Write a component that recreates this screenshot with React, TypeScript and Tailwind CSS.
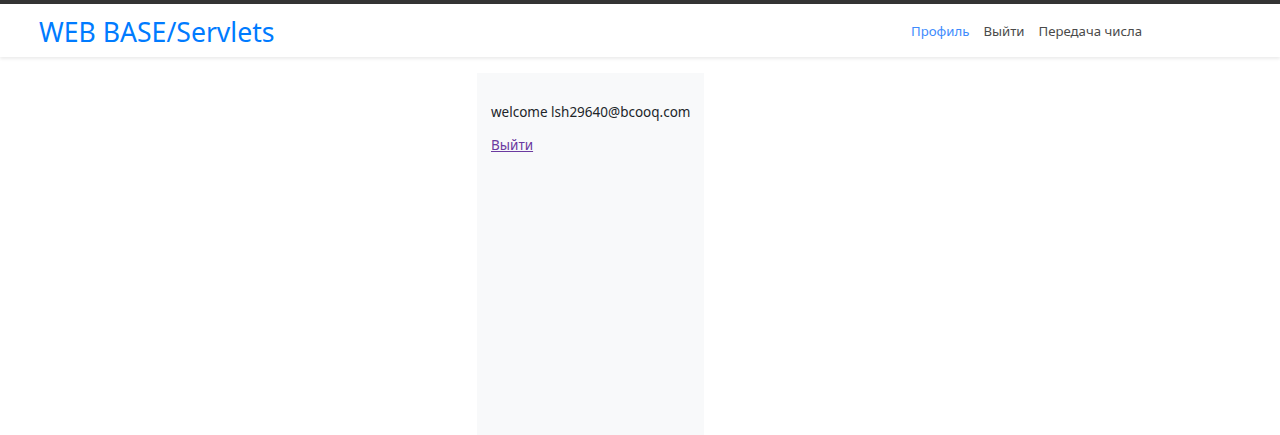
export default function App() {
  return (
    <div className="min-h-[435px] bg-white" style={{ fontFamily: '"Noto Sans", sans-serif' }}>
      {/* top strip */}
      <div className="h-[4px] bg-[#343434]" />

      {/* navbar */}
      <nav className="flex h-[53px] items-center justify-between bg-white pl-[39px] pr-[138px] pt-[3px] shadow-[0_2px_3px_rgba(0,0,0,0.08)]">
        <a className="text-[26.6px] leading-none text-[#007bff]">WEB BASE/Servlets</a>
        <div className="flex items-center gap-[14px] text-[13.2px] text-[#4a4a4a]">
          <a className="text-[#3d8bfd]">Профиль</a>
          <a>Выйти</a>
          <a>Передача числа</a>
        </div>
      </nav>

      {/* content */}
      <div className="flex pl-[477px] pt-[16px]">
        <aside className="min-h-[362px] w-[227px] bg-[#f8f9fa] px-[14px] pt-[28px] text-[13.5px] text-[#212529]">
          <p className="whitespace-nowrap leading-[22px]">welcome lsh29640@bcooq.com</p>
          <a className="mt-[11px] block leading-[22px] text-[#6b3aa0] underline">Выйти</a>
        </aside>
      </div>
    </div>
  );
}
